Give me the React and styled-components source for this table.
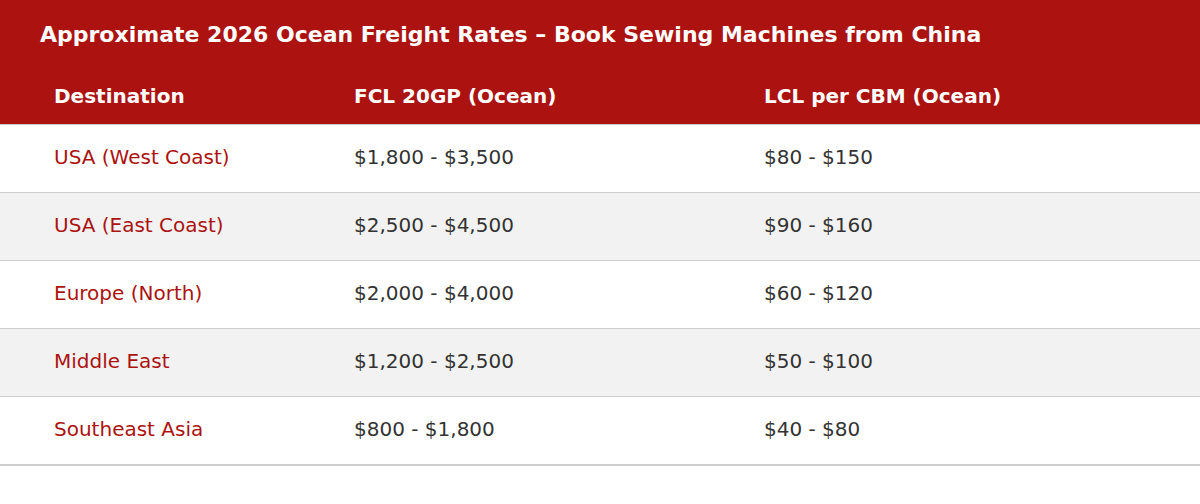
import React from "react";
import styled, { createGlobalStyle } from "styled-components";

const Global = createGlobalStyle`
  html, body { margin: 0; padding: 0; background: #fff; }
  body { font-family: "DejaVu Sans", "Liberation Sans", sans-serif; }
`;

const Wrap = styled.div`
  width: 1200px;
`;

const Title = styled.div`
  background: #ac1210;
  color: #fff;
  font-weight: bold;
  font-size: 22px;
  height: 70px;
  display: flex;
  align-items: center;
  padding: 0 0 2px 40px;
  box-sizing: border-box;
`;

const Row = styled.div`
  display: grid;
  grid-template-columns: 300px 410px 1fr;
  height: ${(p) => (p.$head ? "55px" : p.$last ? "69px" : "68px")};
  box-sizing: border-box;
  background: ${(p) => (p.$head ? "#ac1210" : p.$alt ? "#f2f2f2" : "#fff")};
  border-bottom: ${(p) => (p.$last ? "2px" : "1px")} solid #cfcfcf;
`;

const Cell = styled.div`
  display: flex;
  align-items: center;
  padding-left: 54px;
  padding-bottom: 3px;
  font-size: 20px;
  font-weight: ${(p) => (p.$head ? "bold" : "normal")};
  color: ${(p) => (p.$head ? "#fff" : p.$dest ? "#ac1210" : "#333")};
`;

const data = [
  ["USA (West Coast)", "$1,800 - $3,500", "$80 - $150"],
  ["USA (East Coast)", "$2,500 - $4,500", "$90 - $160"],
  ["Europe (North)", "$2,000 - $4,000", "$60 - $120"],
  ["Middle East", "$1,200 - $2,500", "$50 - $100"],
  ["Southeast Asia", "$800 - $1,800", "$40 - $80"],
];

export default function App() {
  return (
    <Wrap>
      <Global />
      <Title>Approximate 2026 Ocean Freight Rates – Book Sewing Machines from China</Title>
      <Row $head>
        <Cell $head>Destination</Cell>
        <Cell $head>FCL 20GP (Ocean)</Cell>
        <Cell $head>LCL per CBM (Ocean)</Cell>
      </Row>
      {data.map((r, i) => (
        <Row key={i} $alt={i % 2 === 1} $last={i === data.length - 1}>
          <Cell $dest>{r[0]}</Cell>
          <Cell>{r[1]}</Cell>
          <Cell>{r[2]}</Cell>
        </Row>
      ))}
    </Wrap>
  );
}
